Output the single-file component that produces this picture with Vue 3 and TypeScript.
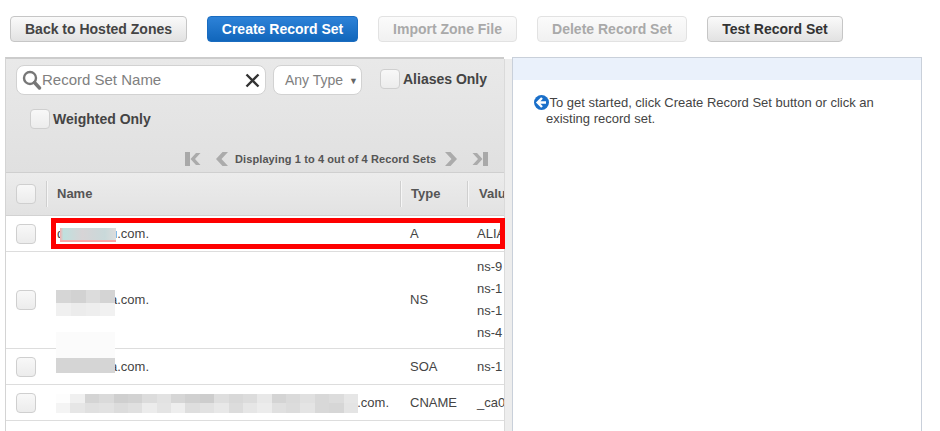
<script setup lang="ts">
interface RecordRow {
  prefix?: string
  suffix: string
  type: string
  values: string[]
  cls: string
  redact: string
}

const buttons = [
  { label: 'Back to Hosted Zones', cls: 'btn-default' },
  { label: 'Create Record Set', cls: 'btn-primary' },
  { label: 'Import Zone File', cls: 'btn-disabled' },
  { label: 'Delete Record Set', cls: 'btn-disabled' },
  { label: 'Test Record Set', cls: 'btn-default' },
]

const rows: RecordRow[] = [
  { prefix: 'd', suffix: 'u.com.', type: 'A', values: ['ALIA'], cls: 'row-a', redact: 'redact-a' },
  { suffix: 'a.com.', type: 'NS', values: ['ns-9', 'ns-1', 'ns-1', 'ns-4'], cls: 'row-ns', redact: 'redact-ns' },
  { suffix: 'a.com.', type: 'SOA', values: ['ns-1'], cls: 'row-soa', redact: 'redact-soa' },
  { suffix: 'a.com.', type: 'CNAME', values: ['_ca0'], cls: 'row-cname', redact: 'redact-cname' },
]

// pixelated blocks over the blanked-out names
const nsTiles = ['#d6d6d6', '#d2d2d2', '#dcdcdc', '#d4d4d4', '#f0f0f0', '#ececec', '#eeeeee', '#f1f1f1']
const cnameTop = ['#fdfdfd', '#f0f0f0', '#d4d4d4', '#dadada', '#cfcfcf', '#d2d2d2', '#dcdcdc', '#e2e2e2', '#d6d6d6', '#d0d0d0', '#cdcdcd', '#dedede', '#d8d8d8', '#dcdcdc', '#e8e8e8', '#d4d4d4', '#dadada', '#e0e0e0', '#d8d8d8', '#dcdcdc', '#e6e6e6']
const cnameBottom = ['#f4f4f4', '#e6e6e6', '#e0e0e0', '#e2e2e2', '#dcdcdc', '#e0e0e0', '#ececec', '#e4e4e4', '#eeeeee', '#dedede', '#e2e2e2', '#e8e8e8', '#dcdcdc', '#e6e6e6', '#ececec', '#e0e0e0', '#dcdcdc', '#e4e4e4', '#d8d8d8', '#d6d6d6', '#e4e4e4']
const cnameTiles = [...cnameTop, ...cnameBottom]
</script>

<template>
  <div class="page">
    <div class="toolbar">
      <button v-for="b in buttons" :key="b.label" :class="['btn', b.cls]">{{ b.label }}</button>
    </div>

    <div class="panes">
      <div class="left">
        <div class="filters">
          <div class="filter-line">
            <div class="search">
              <svg class="icon-search" width="20" height="20" viewBox="0 0 20 20">
                <circle cx="8" cy="8" r="6" fill="none" stroke="#777" stroke-width="2.4" />
                <path d="M12.5 12.5 17.5 18" stroke="#777" stroke-width="3.4" stroke-linecap="round" />
              </svg>
              <span class="search-text">Record Set Name</span>
              <svg class="icon-x" width="15" height="15" viewBox="0 0 15 15">
                <path d="M1.5 1.5 13.5 13.5M13.5 1.5 1.5 13.5" stroke="#333" stroke-width="2.4" />
              </svg>
            </div>
            <div class="select">Any Type <span class="caret">▼</span></div>
            <label class="check-label aliases"><span class="check"></span>Aliases Only</label>
          </div>
          <label class="check-label weighted"><span class="check"></span>Weighted Only</label>
          <div class="pager">
            <svg width="16" height="14" viewBox="0 0 16 14">
              <rect x="0" y="0" width="5" height="14" fill="#a9a9a9" />
              <path d="M11 1 5.5 7l5.5 6h4.5L10 7l5.5-6z" fill="#ababab" />
            </svg>
            <svg class="prev" width="12" height="14" viewBox="0 0 12 14">
              <path d="M6.5 0 0 7l6.5 7H12L5.5 7 12 0z" fill="#ababab" />
            </svg>
            <span class="pager-text">Displaying 1 to 4 out of 4 Record Sets</span>
            <svg class="next" width="12" height="14" viewBox="0 0 12 14">
              <path d="M5.5 0 12 7l-6.5 7H0l6.5-7L0 0z" fill="#ababab" />
            </svg>
            <svg class="last" width="16" height="14" viewBox="0 0 16 14">
              <path d="M5 1l5.5 6L5 13H.5L6 7 .5 1z" fill="#ababab" />
              <rect x="11" y="0" width="5" height="14" fill="#a9a9a9" />
            </svg>
          </div>
        </div>

        <div class="thead">
          <div class="cell-check"><span class="check"></span></div>
          <div class="th th-name">Name</div>
          <div class="th th-type">Type</div>
          <div class="th th-value">Valu</div>
        </div>

        <div v-for="r in rows" :key="r.type" :class="['trow', r.cls]">
          <div class="cell-check"><span class="check"></span></div>
          <div class="td-name">
            <span v-if="r.prefix" class="name-prefix">{{ r.prefix }}</span>
            {{ r.suffix }}
            <div :class="['redact', r.redact]">
              <template v-if="r.type === 'NS'">
                <i v-for="(c, i) in nsTiles" :key="i" :style="{ background: c }"></i>
              </template>
              <template v-if="r.type === 'CNAME'">
                <i v-for="(c, i) in cnameTiles" :key="i" :style="{ background: c }"></i>
              </template>
            </div>
            <div v-if="r.type === 'SOA'" class="redact redact-soa-top"></div>
          </div>
          <div class="td-type">{{ r.type }}</div>
          <div class="td-value">
            <div v-for="(v, i) in r.values" :key="i" class="value-line">{{ v }}</div>
          </div>
          <div v-if="r.type === 'A'" class="highlight"></div>
        </div>
      </div>

      <div class="splitter"></div>

      <div class="right">
        <div class="right-head"></div>
        <div class="hint">
          <svg class="icon-back" width="15" height="15" viewBox="0 0 15 15">
            <circle cx="7.5" cy="7.5" r="7.5" fill="#1a6fc9" />
            <path d="M8 3 3.6 7.5 8 12M4.5 7.5h7.500" fill="none" stroke="#fff" stroke-width="2.4" />
          </svg>
          To get started, click Create Record Set button or click an existing record set.
        </div>
      </div>
    </div>
  </div>
</template>

<style>
html,
body {
  margin: 0;
  background: #fff;
  overflow: hidden;
}
</style>

<style scoped>
.page {
  width: 940px;
  height: 431px;
  overflow: hidden;
  font-family: 'Liberation Sans', Arial, sans-serif;
  color: #444;
  box-sizing: border-box;
  padding-top: 16px;
}

.toolbar {
  display: flex;
  gap: 20px;
  padding-left: 10px;
  height: 26px;
}

.btn {
  height: 26px;
  border-radius: 4px;
  border: 1px solid #c6c6c6;
  font-family: inherit;
  font-size: 14px;
  font-weight: 700;
  padding: 0;
  box-sizing: border-box;
}
.btn-default {
  background: linear-gradient(#fafafa, #e2e2e2);
  color: #444;
}
.btn-primary {
  background: linear-gradient(#2d82d8, #1166bb);
  border-color: #1a6cc0;
  color: #fff;
}
.btn-disabled {
  background: linear-gradient(#fbfbfb, #f1f1f1);
  border-color: #e2e2e2;
  color: #a9a9a9;
}
.btn:nth-child(1) { width: 177px; }
.btn:nth-child(2) { width: 151px; }
.btn:nth-child(3) { width: 139px; }
.btn:nth-child(4) { width: 150px; }
.btn:nth-child(5) { width: 136px; color: #333; }

.panes {
  display: flex;
  margin: 15px 0 0 5px;
  width: 917px;
  height: 374px;
}

.left {
  width: 499px;
  flex-shrink: 0;
  border-top: 2px solid #cccccc;
  box-sizing: border-box;
  border-left: 1px solid #d4d4d4;
  position: relative;
}

.filters {
  height: 113px;
  background: linear-gradient(#e9e9e9, #e0e0e0);
  border-bottom: 1px solid #cfcfcf;
  position: relative;
}

.filter-line {
  display: flex;
  align-items: center;
  padding: 6px 0 0 10px;
}

.search {
  width: 250px;
  height: 30px;
  box-sizing: border-box;
  background: #fff;
  border: 1px solid #d2d2d2;
  border-radius: 8px;
  display: flex;
  align-items: center;
  padding: 0 5px 0 5px;
}
.icon-search { flex-shrink: 0; }
.search-text {
  font-size: 15px;
  color: #808080;
  flex: 1;
  margin-top: -2px;
}

.select {
  width: 89px;
  height: 30px;
  box-sizing: border-box;
  margin-left: 7px;
  background: #fff;
  border: 1px solid #d2d2d2;
  border-radius: 8px;
  font-size: 14px;
  color: #808080;
  line-height: 28px;
  padding-left: 11px;
  white-space: nowrap;
}
.caret {
  font-size: 9px;
  vertical-align: 1px;
  color: #666;
  margin-left: 2px;
}

.check {
  display: block;
  width: 18px;
  height: 18px;
  flex-shrink: 0;
  border: 1px solid #cfcfcf;
  border-radius: 4px;
  background: linear-gradient(#f8f8f8, #ececec);
}

.check-label {
  display: flex;
  align-items: center;
  gap: 3px;
  font-size: 14px;
  font-weight: 700;
  color: #444;
  white-space: nowrap;
}
.aliases {
  margin-left: 18px;
  position: relative;
  top: -1px;
}
.weighted {
  margin: 14px 0 0 24px;
}

.pager {
  position: absolute;
  top: 93px;
  left: 179px;
  display: flex;
  align-items: center;
  height: 14px;
}
.prev { margin-left: 15px; }
.next { margin-left: 9px; }
.last { margin-left: 15px; }
.pager-text {
  font-size: 11px;
  font-weight: 700;
  color: #555;
  margin-left: 7px;
  letter-spacing: 0.1px;
  white-space: nowrap;
}

.thead {
  height: 43px;
  box-sizing: border-box;
  display: grid;
  grid-template-columns: 40px 354px 67px 37px;
  align-items: center;
  background: linear-gradient(#ececec, #e2e2e2);
  border-bottom: 1px solid #d2d2d2;
  overflow: hidden;
}

.cell-check {
  padding-left: 10px;
}

.th {
  height: 26px;
  line-height: 26px;
  border-left: 1px solid #cfcfcf;
  box-shadow: inset 1px 0 0 #f6f6f6;
  font-size: 13px;
  font-weight: 700;
  color: #555;
  padding-left: 10px;
  white-space: nowrap;
}
.th-value {
  overflow: hidden;
  padding-left: 11px;
}

.trow {
  display: grid;
  grid-template-columns: 40px 354px 67px 37px;
  align-items: center;
  box-sizing: border-box;
  border-bottom: 1px solid #dddddd;
  background: #fff;
  font-size: 13px;
  color: #444;
  position: relative;
}
.row-a,
.row-soa,
.row-cname {
  height: 36px;
}
.row-ns {
  height: 97px;
}
.row-ns .td-name,
.row-ns .td-type {
  margin-top: -2px;
}

.td-name {
  position: relative;
  padding-left: 64px;
  white-space: nowrap;
}

.name-prefix {
  position: absolute;
  left: 11px;
}

.td-type {
  padding-left: 10px;
}

.td-value {
  padding-left: 10px;
  overflow: hidden;
  white-space: nowrap;
}
.value-line {
  line-height: 22px;
}

.row-cname .td-name {
  padding-left: 304px;
}

.redact {
  position: absolute;
  left: 10px;
  top: 50%;
}
.redact-a {
  left: 14px;
  width: 56px;
  height: 14px;
  margin-top: -6px;
  background: linear-gradient(90deg, #f3b0b0 0, #bfe0de 6%, #d7d4d6 40%, #c9d9da 80%, #dcdcdc);
  border-bottom: 2px solid #f8a5a5;
  box-sizing: border-box;
}
.redact-ns {
  width: 59px;
  height: 26px;
  display: grid;
  grid-template-columns: repeat(4, 1fr);
  grid-template-rows: repeat(2, 1fr);
  margin-top: -9px;
}
.redact-soa {
  width: 59px;
  height: 15px;
  margin-top: -9px;
  background: #d5d5d5;
}
.redact-soa-top {
  width: 59px;
  height: 26px;
  margin-top: -35px;
  background: #fbfbfb;
}
.redact-cname {
  width: 302px;
  height: 19px;
  margin-top: -9px;
  display: grid;
  grid-template-columns: repeat(21, 1fr);
  grid-template-rows: repeat(2, 1fr);
}
.redact i {
  display: block;
}

.highlight {
  position: absolute;
  left: 45px;
  right: -1px;
  top: 2px;
  bottom: 2px;
  border: 5px solid #fe0000;
  pointer-events: none;
}

.splitter {
  width: 8px;
  flex-shrink: 0;
  background: #ededed;
  margin-top: 2px;
  border-left: 1px solid #dadada;
  box-sizing: border-box;
}

.right {
  flex: 1;
  box-sizing: border-box;
  border: 1px solid #c9d0da;
  border-bottom: 0;
  background: #fff;
}

.right-head {
  height: 22px;
  background: #eaf1fb;
}

.hint {
  padding: 15px 40px 0 33px;
  font-size: 13px;
  line-height: 16px;
  color: #444;
  text-indent: -12px;
}
.icon-back {
  vertical-align: -3px;
  margin-right: -3px;
}
</style>
